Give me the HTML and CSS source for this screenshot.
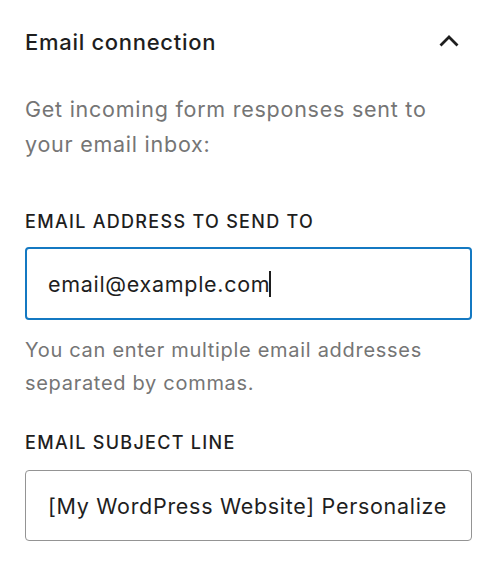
FILE: index.html
```html
<!DOCTYPE html>
<html lang="en">
<head>
<meta charset="utf-8">
<link rel="stylesheet" href="styles.css">
</head>
<body>
<div class="panel">
  <div class="panel-head">
    <h2 class="panel-title">Email connection</h2>
    <svg class="chevron" width="24" height="24" viewBox="0 0 24 24" aria-hidden="true">
      <path d="M3.5 15.5 L12 7 L20.5 15.5" fill="none" stroke="#1e1e1e" stroke-width="2.8" stroke-linecap="butt" stroke-linejoin="miter"/>
    </svg>
  </div>
  <p class="desc">Get incoming form responses sent to your email inbox:</p>
  <div class="field field-first">
    <label class="label">EMAIL ADDRESS TO SEND TO</label>
    <div class="input input-focus"><span class="value">email@example.com</span><span class="caret"></span></div>
    <p class="help">You can enter multiple email addresses separated by commas.</p>
  </div>
  <div class="field field-second">
    <label class="label">EMAIL SUBJECT LINE</label>
    <div class="input"><span class="value">[My WordPress Website] Personalize</span></div>
  </div>
</div>
</body>
</html>
```
FILE: styles.css
```css
* { box-sizing: border-box; }
html, body { margin: 0; padding: 0; background: #fff; }
body {
  font-family: Inter, "Noto Sans", "Liberation Sans", sans-serif;
  color: #1e1e1e;
  width: 500px;
  height: 566px;
  overflow: hidden;
}
.panel { padding: 28px 28px 0 25px; }
.panel-head {
  display: flex;
  align-items: center;
  justify-content: space-between;
  height: 28px;
}
.panel-title {
  margin: 0;
  font-size: 22px;
  font-weight: 500;
  line-height: 28px;
  letter-spacing: 0.7px;
  color: #1e1e1e;
}
.chevron { margin-right: 11px; }
.desc {
  margin: 36px 0 0;
  font-size: 21.5px;
  line-height: 35px;
  letter-spacing: 0.75px;
  color: #757575;
  width: 440px;
}
.field-first { margin-top: 48px; }
.field-second { margin-top: 31px; }
.label {
  display: block;
  font-size: 18px;
  font-weight: 500;
  line-height: 24px;
  letter-spacing: 1.3px;
  color: #1e1e1e;
}
.input {
  margin-top: 14px;
  width: 447px;
  height: 71px;
  border: 1px solid #949494;
  border-radius: 4px;
  display: flex;
  align-items: center;
  padding-left: 22px;
  font-size: 21.5px;
  letter-spacing: 0.7px;
  color: #1e1e1e;
  white-space: nowrap;
  overflow: hidden;
}
.field-second .input { margin-top: 15px; }
.input-focus {
  border: 2px solid #1479c2;
  padding-left: 21px;
  height: 73px;
  margin-top: 13px;
}
.caret {
  display: inline-block;
  width: 2px;
  height: 26px;
  background: #1e1e1e;
  margin-left: -1px;
}
.help {
  margin: 14px 0 0;
  font-size: 20px;
  line-height: 33px;
  letter-spacing: 0.7px;
  color: #757575;
}
```
